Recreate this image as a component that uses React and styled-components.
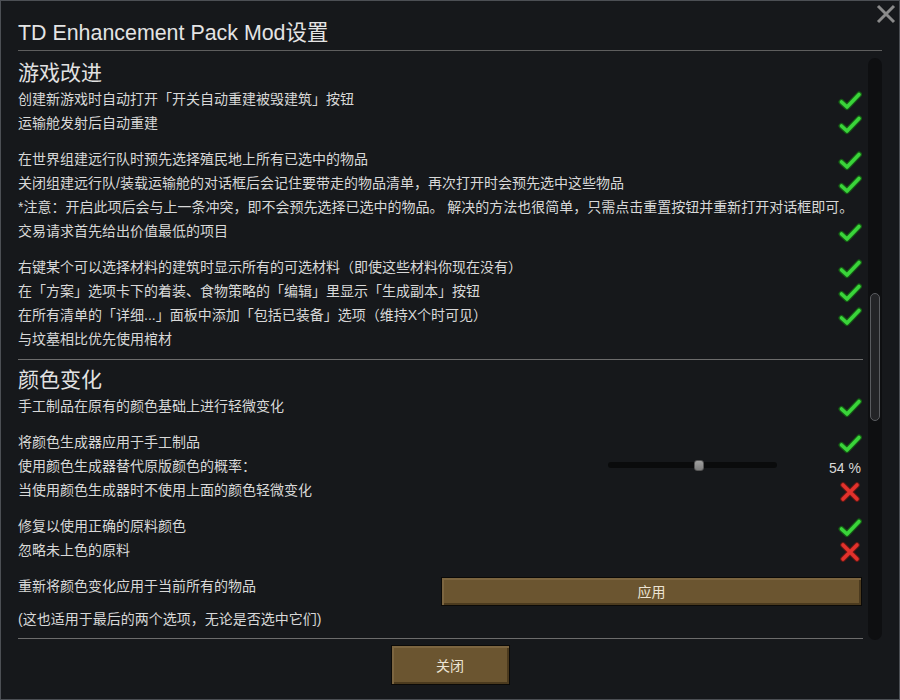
import React from 'react';
import styled, { createGlobalStyle } from 'styled-components';

const GlobalStyle = createGlobalStyle`
  html, body {
    margin: 0;
    padding: 0;
    background: #16181b;
  }
  * { box-sizing: border-box; }
`;

const FONT = `"Liberation Sans", "Noto Sans CJK SC", sans-serif`;

const Window = styled.div`
  position: relative;
  width: 900px;
  height: 700px;
  background: #16181b;
  border: 1px solid #4c4f54;
  padding: 17px 17px 0 17px;
  font-family: ${FONT};
  color: #d8d8d8;
  display: flex;
  flex-direction: column;
`;

const CloseX = styled.div`
  position: absolute;
  top: 3px;
  right: 2px;
  width: 22px;
  height: 20px;
`;

const Title = styled.div`
  font-size: 21.4px;
  line-height: 30px;
  height: 33px;
  padding-bottom: 2px;
  color: #e4e4e4;
  border-bottom: 1px solid #5e5e5e;
`;

const ScrollArea = styled.div`
  margin-top: 7px;
  height: 582px;
  display: flex;
  gap: 5px;
`;

const Content = styled.div`
  width: 845px;
  display: flex;
  flex-direction: column;
`;

const Track = styled.div`
  width: 14px;
  height: 582px;
  border-radius: 7px;
  background: #0e0f11;
  padding: 235px 2px 0 2px;
`;

const Thumb = styled.div`
  width: 10px;
  height: 128px;
  border-radius: 5px;
  border: 1px solid #5a5c60;
  background: #232427;
`;

const Header = styled.div`
  font-size: 21px;
  line-height: 29px;
  height: 29px;
  color: #e2e2e2;
  margin-top: ${p => p.$top || 0}px;
`;

const Row = styled.div`
  display: flex;
  align-items: flex-start;
  justify-content: space-between;
  height: 24px;
  font-size: 14px;
  line-height: 24px;
  margin-top: ${p => (p.$gap ? 12 : 0)}px;
  white-space: nowrap;
`;

const Icon = styled.svg`
  flex: none;
  margin-top: 4px;
  margin-right: ${p => p.$mr || 0}px;
`;

const Divider = styled.div`
  height: 1px;
  background: #6c6c6c;
  margin-top: ${p => p.$top}px;
`;

const SliderBox = styled.div`
  display: flex;
  align-items: center;
  margin-left: auto;
  height: 22px;
`;

const SliderTrack = styled.div`
  width: 169px;
  height: 6px;
  border-radius: 3px;
  background: #0a0b0c;
  display: flex;
  align-items: center;
`;

const SliderThumb = styled.div`
  width: 10px;
  height: 11px;
  border-radius: 3px;
  background: linear-gradient(#a0a0a0, #7d7d7d);
  border: 1px solid #555;
  flex: none;
`;

const Value = styled.div`
  width: 86px;
  text-align: right;
  padding-right: 2px;
  line-height: 28px;
`;

const ApplyRow = styled.div`
  display: flex;
  justify-content: space-between;
  height: 33px;
  margin-top: 12px;
  font-size: 14px;
  line-height: 24px;
`;

const WoodButton = styled.div`
  width: ${p => p.$w}px;
  height: ${p => p.$h}px;
  margin-top: ${p => p.$top || 0}px;
  margin-right: ${p => p.$mr || 0}px;
  background: #6b5530;
  border: 1px solid #0b0a08;
  box-shadow: inset 2px 2px 0 #7c6540, inset -2px -2px 0 #4b3a1e;
  color: #ece4d4;
  font-size: 14px;
  display: flex;
  align-items: center;
  justify-content: center;
  flex: none;
`;

const Footer = styled.div`
  display: flex;
  justify-content: center;
  padding-top: 5px;
`;

const Check = () => (
  <Icon width="24" height="20" viewBox="0 0 24 20" $mr={1}>
    <path d="M3.5 11 L9 16 L21 3.5" fill="none" stroke="#155a15" strokeWidth="6" strokeLinecap="round" strokeLinejoin="round" />
    <path d="M3.5 11 L9 16 L21 3.5" fill="none" stroke="#3ad43a" strokeWidth="3.6" strokeLinecap="round" strokeLinejoin="round" />
  </Icon>
);

const Cross = () => (
  <Icon width="20" height="20" viewBox="0 0 20 20" $mr={3}>
    <path d="M3 3 L17 17 M17 3 L3 17" fill="none" stroke="#6a1814" strokeWidth="5.5" strokeLinecap="round" />
    <path d="M3 3 L17 17 M17 3 L3 17" fill="none" stroke="#e2322c" strokeWidth="3.6" strokeLinecap="round" />
  </Icon>
);

const Setting = ({ text, state, gap }) => (
  <Row $gap={gap}>
    <span>{text}</span>
    {state === 'on' && <Check />}
    {state === 'off' && <Cross />}
  </Row>
);

const game = [
  { text: '创建新游戏时自动打开「开关自动重建被毁建筑」按钮', state: 'on' },
  { text: '运输舱发射后自动重建', state: 'on' },
  { text: '在世界组建远行队时预先选择殖民地上所有已选中的物品', state: 'on', gap: true },
  { text: '关闭组建远行队/装载运输舱的对话框后会记住要带走的物品清单，再次打开时会预先选中这些物品', state: 'on' },
  { text: '*注意：开启此项后会与上一条冲突，即不会预先选择已选中的物品。 解决的方法也很简单，只需点击重置按钮并重新打开对话框即可。' },
  { text: '交易请求首先给出价值最低的项目', state: 'on' },
  { text: '右键某个可以选择材料的建筑时显示所有的可选材料（即使这些材料你现在没有）', state: 'on', gap: true },
  { text: '在「方案」选项卡下的着装、食物策略的「编辑」里显示「生成副本」按钮', state: 'on' },
  { text: '在所有清单的「详细...」面板中添加「包括已装备」选项（维持X个时可见）', state: 'on' },
  { text: '与坟墓相比优先使用棺材' },
];

export default function App() {
  const percent = 54;
  return (
    <>
      <GlobalStyle />
      <Window>
        <CloseX>
          <svg width="22" height="20" viewBox="0 0 22 20">
            <path d="M3 2 L19 18 M19 2 L3 18" stroke="#8a8a8a" strokeWidth="3" fill="none" />
          </svg>
        </CloseX>
        <Title>TD Enhancement Pack Mod设置</Title>
        <ScrollArea>
          <Content>
            <Header>游戏改进</Header>
            {game.map((r, i) => (
              <Setting key={i} {...r} />
            ))}
            <Divider $top={8} />
            <Header $top={5}>颜色变化</Header>
            <Setting text="手工制品在原有的颜色基础上进行轻微变化" state="on" />
            <Setting text="将颜色生成器应用于手工制品" state="on" gap />
            <Row>
              <span>使用颜色生成器替代原版颜色的概率：</span>
              <SliderBox>
                <SliderTrack>
                  <SliderThumb style={{ marginLeft: Math.round((169 - 10) * percent / 100) }} />
                </SliderTrack>
              </SliderBox>
              <Value>{percent} %</Value>
            </Row>
            <Setting text="当使用颜色生成器时不使用上面的颜色轻微变化" state="off" />
            <Setting text="修复以使用正确的原料颜色" state="on" gap />
            <Setting text="忽略未上色的原料" state="off" />
            <ApplyRow>
              <span>重新将颜色变化应用于当前所有的物品</span>
              <WoodButton $w={421} $h={29} $top={3} $mr={1}>应用</WoodButton>
            </ApplyRow>
            <Row>
              <span>(这也适用于最后的两个选项，无论是否选中它们)</span>
            </Row>
            <Divider $top={7} />
          </Content>
          <Track>
            <Thumb />
          </Track>
        </ScrollArea>
        <Footer>
          <WoodButton $w={119} $h={40}>关闭</WoodButton>
        </Footer>
      </Window>
    </>
  );
}
